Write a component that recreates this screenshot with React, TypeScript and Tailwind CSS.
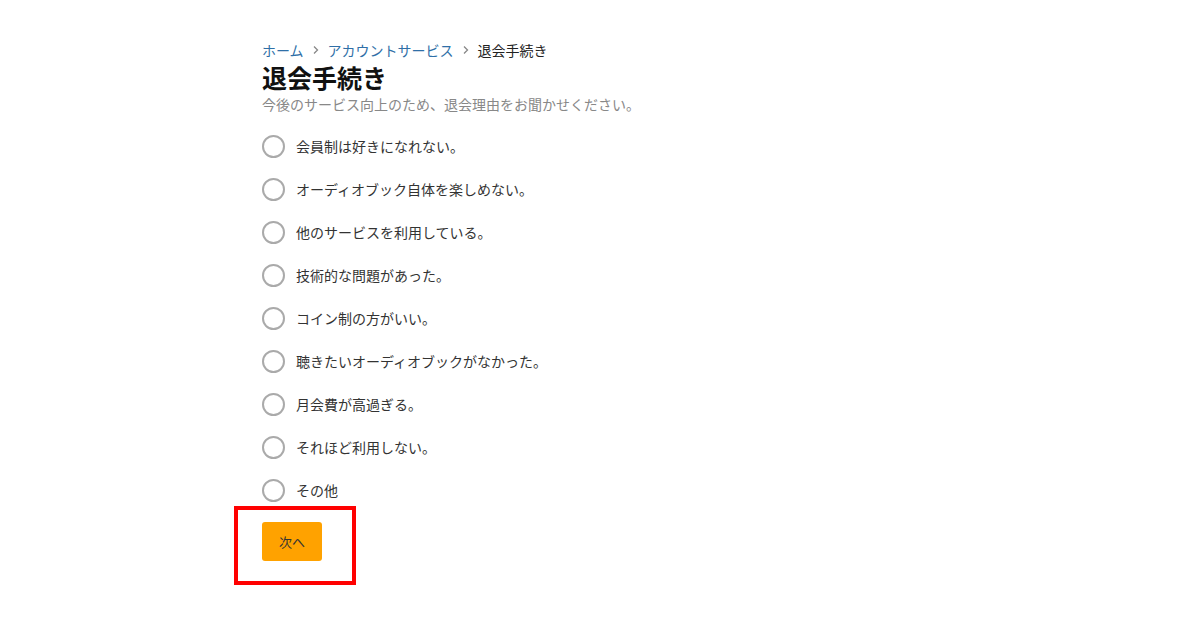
const reasons = [
  "会員制は好きになれない。",
  "オーディオブック自体を楽しめない。",
  "他のサービスを利用している。",
  "技術的な問題があった。",
  "コイン制の方がいい。",
  "聴きたいオーディオブックがなかった。",
  "月会費が高過ぎる。",
  "それほど利用しない。",
  "その他",
];

function Chevron() {
  return (
    <svg width="8" height="10" viewBox="0 0 8 10" className="mx-[8px]">
      <path d="M2 1.5 L5.5 5 L2 8.5" fill="none" stroke="#888" strokeWidth="1.3" />
    </svg>
  );
}

function App() {
  return (
    <div
      className="w-[1200px] h-[630px] bg-white pl-[262px] pt-[40px] text-[#333]"
      style={{ fontFamily: '"Noto Sans CJK JP", "Noto Sans", sans-serif' }}
    >
      <nav className="flex items-center h-[20px] text-[14px] leading-[20px]">
        <span className="text-[#2f6fa7]">ホーム</span>
        <Chevron />
        <span className="text-[#2f6fa7]">アカウントサービス</span>
        <Chevron />
        <span className="text-[#222]">退会手続き</span>
      </nav>
      <h1 className="mt-[2px] h-[30px] text-[25px] leading-[30px] font-bold text-[#111]">退会手続き</h1>
      <p className="mt-[2px] h-[20px] text-[14px] leading-[20px] text-[#888]">
        今後のサービス向上のため、退会理由をお聞かせください。
      </p>

      <ul className="mt-[11px] flex flex-col">
        {reasons.map((r) => (
          <li key={r} className="h-[43px] flex items-center">
            <span className="w-[23px] h-[23px] rounded-full border-2 border-[#aaa] bg-white shrink-0" />
            <span className="ml-[11px] text-[14px] text-[#333]">{r}</span>
          </li>
        ))}
      </ul>

      <div className="relative mt-[10px] w-[60px] h-[39px]">
        <button className="w-[60px] h-[39px] rounded-[3px] bg-[#ffa200] text-[13px] text-[#333]">
          次へ
        </button>
        <div className="absolute left-[-28px] top-[-16px] w-[122px] h-[79px] border-[4px] border-[#ff0000] pointer-events-none" />
      </div>
    </div>
  );
}

export default App;
